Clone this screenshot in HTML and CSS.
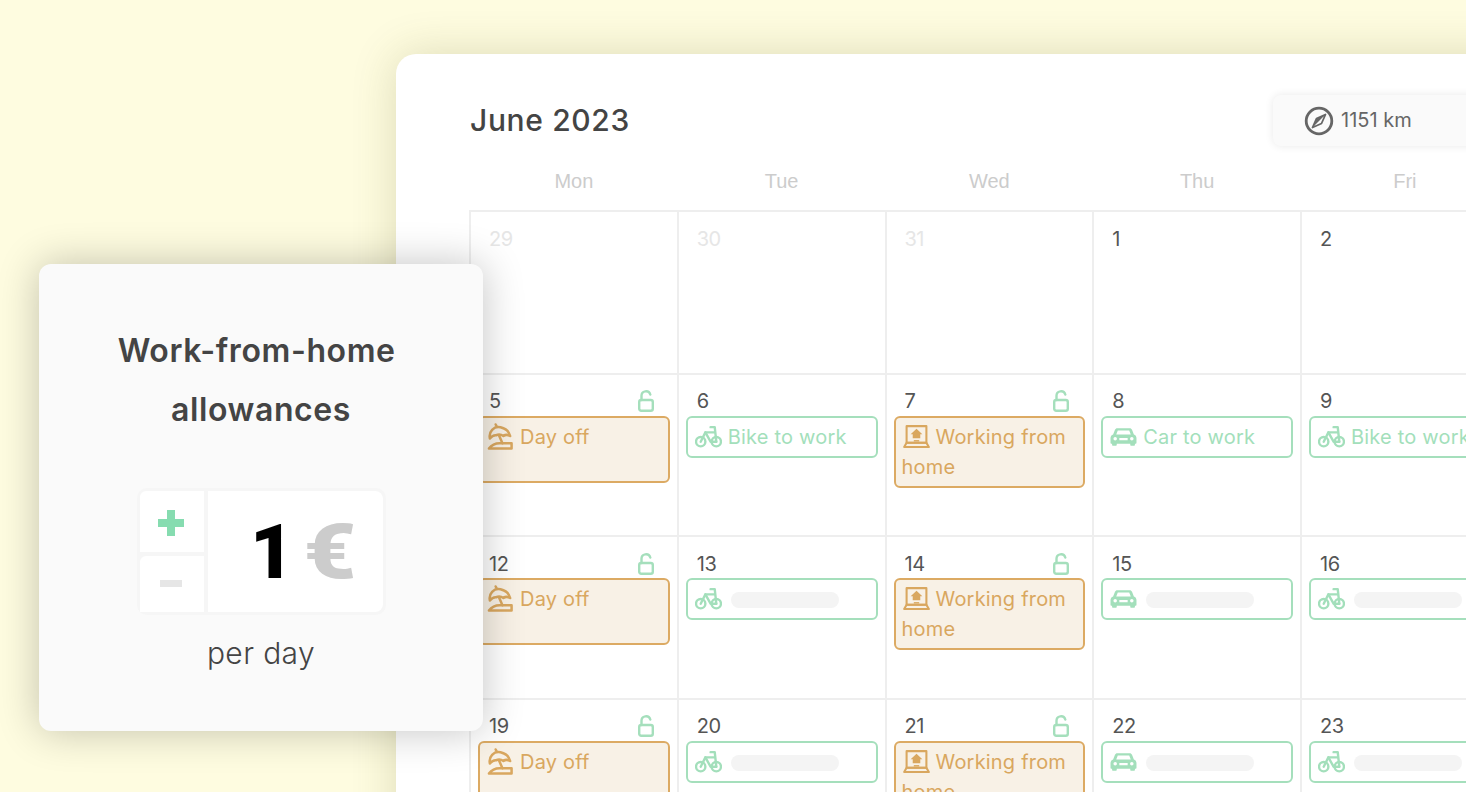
FILE: index.html
```html
<!DOCTYPE html>
<html lang="en">
<head>
    <meta charset="UTF-8">
    <meta name="viewport" content="width=device-width, initial-scale=1.0">
    <title>Work-from-home allowances</title>
    <link rel="stylesheet" href="styles.css">
</head>
<body>
    <svg class="sprites" xmlns="http://www.w3.org/2000/svg">
        <symbol id="i-lock" viewBox="0 0 16 22">
            <path d="M3.500 10V6a4.500 4.500 0 0 1 8.800-1.500" fill="none" stroke="currentColor" stroke-width="2.400" stroke-linecap="round"/>
            <rect x="1.200" y="10" width="13.600" height="10.800" rx="2" fill="none" stroke="currentColor" stroke-width="2.400"/>
        </symbol>
        <symbol id="i-beach" viewBox="0 0 28 28">
            <g fill="none" stroke="currentColor" stroke-width="2.600" stroke-linecap="round" stroke-linejoin="round">
                <path d="M10 3.500L9 1.500"/>
                <path d="M3 16C1.500 9 7 3 14 4.500c5 1.200 9 4.500 10 9-2.500-1.500-5-1.500-7 0-2.500-1.800-5-2-7.500-.8-2.500-.3-4.500.8-6.500 3.300z"/>
                <path d="M12.500 13L16 21"/>
                <path d="M2 26.500c3-4 8-6 13-5.500h10.500v5.500z"/>
            </g>
        </symbol>
        <symbol id="i-bike" viewBox="0 0 26 22">
            <g fill="none" stroke="currentColor" stroke-width="2.300" stroke-linecap="round" stroke-linejoin="round">
                <circle cx="5.500" cy="16" r="4.500"/>
                <circle cx="20.500" cy="16" r="4.500"/>
                <path d="M5.500 16L10 7h9"/>
                <path d="M15 2h4l1.500 14"/>
                <path d="M10 7l5 9h5.500"/>
            </g>
        </symbol>
        <symbol id="i-home" viewBox="0 0 30 26">
            <g fill="none" stroke="currentColor" stroke-width="2.300" stroke-linejoin="round">
                <rect x="4" y="1.500" width="22" height="18.500"/>
                <path d="M1.300 24.700L4 20h22l2.700 4.700z"/>
            </g>
            <path d="M15 4.500l6.500 6h-2.300V15h-8.400v-4.500H8.500z" fill="currentColor"/>
            <path d="M12 17h6v1.600h-6z" fill="currentColor"/>
        </symbol>
        <symbol id="i-car" viewBox="0 0 26 20">
            <path d="M7 2h12c1 0 1.800.6 2.200 1.500L23 8c1.500.5 2.500 1.800 2.500 3.500V16c0 .6-.4 1-1 1H24v1c0 .6-.4 1-1 1h-2.500c-.6 0-1-.4-1-1v-1h-13v1c0 .6-.4 1-1 1H3c-.6 0-1-.4-1-1v-1h-.5c-.6 0-1-.4-1-1v-4.500C.5 9.800 1.500 8.500 3 8l1.800-4.500C5.200 2.600 6 2 7 2zm.5 2.200L6 8h14l-1.500-3.800zM5 10.500a1.700 1.700 0 1 0 0 3.400 1.700 1.700 0 0 0 0-3.400zm16 0a1.700 1.700 0 1 0 0 3.400 1.700 1.700 0 0 0 0-3.400zm-12 1v2h8v-2z" fill="currentColor" fill-rule="evenodd"/>
        </symbol>
        <symbol id="i-compass" viewBox="0 0 30 30">
            <circle cx="15" cy="15" r="12.800" fill="none" stroke="currentColor" stroke-width="2.800"/>
            <path d="M21.500 8.500L17.500 17.500 8.500 21.500 12.500 12.500z" fill="none" stroke="currentColor" stroke-width="1.800" stroke-linejoin="round"/>
            <path d="M21.500 8.500L12.500 12.500 8.500 21.500z" fill="currentColor"/>
        </symbol>
    </svg>

    <div class="panel">
        <div class="panel-head">
            <h1>June 2023</h1>
            <div class="distance">
                <svg class="distance-icon"><use href="#i-compass"/></svg>
                <span>1151 km</span>
            </div>
        </div>

        <div class="weekdays">
            <div>Mon</div>
            <div>Tue</div>
            <div>Wed</div>
            <div>Thu</div>
            <div>Fri</div>
        </div>

        <div class="calendar">
            <div class="cell muted"><div class="day">29</div></div>
            <div class="cell muted"><div class="day">30</div></div>
            <div class="cell muted"><div class="day">31</div></div>
            <div class="cell"><div class="day">1</div></div>
            <div class="cell"><div class="day">2</div></div>

            <div class="cell">
                <div class="day">5 <svg class="lock"><use href="#i-lock"/></svg></div>
                <div class="chip chip-off"><svg class="chip-icon"><use href="#i-beach"/></svg>Day off</div>
            </div>
            <div class="cell">
                <div class="day">6</div>
                <div class="chip"><svg class="chip-icon"><use href="#i-bike"/></svg>Bike to work</div>
            </div>
            <div class="cell">
                <div class="day">7 <svg class="lock"><use href="#i-lock"/></svg></div>
                <div class="chip chip-home"><svg class="chip-icon"><use href="#i-home"/></svg>Working from home</div>
            </div>
            <div class="cell">
                <div class="day">8</div>
                <div class="chip"><svg class="chip-icon"><use href="#i-car"/></svg>Car to work</div>
            </div>
            <div class="cell">
                <div class="day">9</div>
                <div class="chip chip-nowrap"><svg class="chip-icon"><use href="#i-bike"/></svg>Bike to work</div>
            </div>

            <div class="cell">
                <div class="day">12 <svg class="lock"><use href="#i-lock"/></svg></div>
                <div class="chip chip-off"><svg class="chip-icon"><use href="#i-beach"/></svg>Day off</div>
            </div>
            <div class="cell">
                <div class="day">13</div>
                <div class="chip"><svg class="chip-icon"><use href="#i-bike"/></svg><span class="blank"></span></div>
            </div>
            <div class="cell">
                <div class="day">14 <svg class="lock"><use href="#i-lock"/></svg></div>
                <div class="chip chip-home"><svg class="chip-icon"><use href="#i-home"/></svg>Working from home</div>
            </div>
            <div class="cell">
                <div class="day">15</div>
                <div class="chip"><svg class="chip-icon"><use href="#i-car"/></svg><span class="blank"></span></div>
            </div>
            <div class="cell">
                <div class="day">16</div>
                <div class="chip"><svg class="chip-icon"><use href="#i-bike"/></svg><span class="blank"></span></div>
            </div>

            <div class="cell">
                <div class="day">19 <svg class="lock"><use href="#i-lock"/></svg></div>
                <div class="chip chip-off"><svg class="chip-icon"><use href="#i-beach"/></svg>Day off</div>
            </div>
            <div class="cell">
                <div class="day">20</div>
                <div class="chip"><svg class="chip-icon"><use href="#i-bike"/></svg><span class="blank"></span></div>
            </div>
            <div class="cell">
                <div class="day">21 <svg class="lock"><use href="#i-lock"/></svg></div>
                <div class="chip chip-home"><svg class="chip-icon"><use href="#i-home"/></svg>Working from home</div>
            </div>
            <div class="cell">
                <div class="day">22</div>
                <div class="chip"><svg class="chip-icon"><use href="#i-car"/></svg><span class="blank"></span></div>
            </div>
            <div class="cell">
                <div class="day">23</div>
                <div class="chip"><svg class="chip-icon"><use href="#i-bike"/></svg><span class="blank"></span></div>
            </div>
        </div>
    </div>

    <div class="allowance">
        <h2>Work-from-home&nbsp;<br>allowances</h2>
        <div class="stepper">
            <div class="step"><span class="plus"></span></div>
            <div class="amount"><span class="amount-num">1</span><span class="amount-unit">€</span></div>
            <div class="step"><span class="minus"></span></div>
        </div>
        <p>per day</p>
    </div>
</body>
</html>
```

FILE: styles.css
```css
* {
    margin: 0;
    padding: 0;
    box-sizing: border-box;
}
html, body {
    height: 792px;
    overflow: hidden;
}
body {
    position: relative;
    font-family: Inter, "Liberation Sans", sans-serif;
    background-color: #fefce0;
    color: #444;
}
.sprites {
    display: none;
}

/* calendar window */
.panel {
    width: 1184px;
    height: 860px;
    margin: 54px 0 0 396px;
    padding: 41px 0 0 74px;
    background-color: #fff;
    border-radius: 20px 0 0 0;
    box-shadow: 0 0 45px rgba(90, 90, 20, 0.2);
}
.panel-head {
    display: flex;
    justify-content: space-between;
    align-items: center;
    width: 1039px;
}
h1 {
    padding-bottom: 2px;
    font-size: 30px;
    font-weight: 500;
    letter-spacing: 0.65px;
    color: #444;
}
.distance {
    display: flex;
    align-items: center;
    gap: 7px;
    width: 236px;
    height: 51px;
    padding-left: 31px;
    font-size: 20px;
    color: #666;
    background-color: #fafafa;
    border-radius: 8px;
    box-shadow: 0 0 8px rgba(0, 0, 0, 0.09);
}
.distance span {
    padding-bottom: 2px;
}
.distance-icon {
    width: 30px;
    height: 30px;
    color: #666;
}
.weekdays {
    display: grid;
    grid-template-columns: repeat(5, 207.75px);
    margin-top: 23px;
    margin-bottom: 17px;
    font-family: "Liberation Sans", sans-serif;
    font-size: 20px;
    line-height: 24px;
    color: #ccc;
    text-align: center;
}
.calendar {
    display: grid;
    grid-template-columns: repeat(5, 207.75px);
    grid-auto-rows: 162.5px;
    margin-left: -1px;
    border-top: 2px solid #eee;
}
.cell {
    padding: 14.5px 7px 0;
    border-left: 2px solid #eee;
    border-bottom: 2px solid #eee;
    overflow: hidden;
}
.day {
    display: flex;
    justify-content: space-between;
    align-items: center;
    height: 24px;
    margin-bottom: 2.5px;
    padding: 0 16px 0 11px;
    font-size: 20px;
    letter-spacing: -0.5px;
    color: #555;
}
.muted .day {
    color: #e6e6e6;
}
.lock {
    width: 16px;
    height: 22px;
    color: #a5dfbc;
}

/* day entries */
.chip {
    min-height: 40px;
    padding: 4px 6px;
    font-size: 20px;
    letter-spacing: 0.2px;
    line-height: 30px;
    color: #a3dfbb;
    background-color: #fff;
    border: 2px solid #a5dfbc;
    border-radius: 6px;
}
.chip-nowrap {
    white-space: nowrap;
    width: 240px;
}
.chip-off, .chip-home {
    color: #d9a75f;
    background-color: #f8f1e6;
    border-color: #dcaa63;
}
.chip-off {
    min-height: 67px;
}
.chip-icon {
    display: inline-block;
    width: 27px;
    height: 27px;
    margin: 0 6px 0 1px;
    vertical-align: -6px;
}
.blank {
    display: inline-block;
    width: 108px;
    height: 16px;
    margin-left: 3px;
    background-color: #f4f4f4;
    border-radius: 8px;
    vertical-align: -2px;
}

/* floating allowance card */
.allowance {
    position: absolute;
    left: 39px;
    top: 264px;
    display: flex;
    flex-direction: column;
    align-items: center;
    width: 444px;
    height: 467px;
    padding-top: 57px;
    background-color: #fafafa;
    border-radius: 12px;
    box-shadow: 0 0 42px rgba(0, 0, 0, 0.24);
}
h2 {
    font-size: 32px;
    font-weight: 600;
    letter-spacing: 0.6px;
    line-height: 59px;
    text-align: center;
    color: #444;
}
.stepper {
    display: grid;
    grid-template-columns: 64px 175px;
    grid-template-rows: 61px 56px;
    gap: 4px;
    width: 249px;
    height: 127px;
    margin-top: 49px;
    padding: 3px;
    background-color: #f6f6f6;
    border-radius: 10px;
}
.step {
    display: flex;
    justify-content: center;
    align-items: center;
    background-color: #fff;
    border-radius: 6px 0 0 0;
}
.amount {
    grid-column: 2;
    grid-row: 1 / 3;
    display: flex;
    justify-content: center;
    align-items: center;
    gap: 14px;
    padding-left: 12px;
    font-family: Roboto, sans-serif;
    background-color: #fff;
    border-radius: 0 8px 8px 0;
}
.amount-num {
    font-size: 76px;
    font-weight: 900;
    color: #000;
}
.amount-unit {
    display: inline-block;
    font-size: 76px;
    font-weight: 900;
    color: #ccc;
    transform: scaleX(1.2);
}
.plus, .minus {
    position: relative;
    display: block;
    width: 26px;
    height: 8px;
    margin-right: 1px;
    background-color: #86dcb0;
}
.plus {
    margin-top: 3px;
}
.plus::after {
    content: "";
    position: absolute;
    left: 9px;
    top: -9px;
    width: 8px;
    height: 26px;
    background-color: #86dcb0;
}
.minus {
    width: 22px;
    height: 7px;
    margin-top: -2px;
    background-color: #e6e6e6;
}
.allowance p {
    margin-top: 20px;
    font-size: 30px;
    font-weight: 300;
    letter-spacing: 0.4px;
    color: #444;
}
```
